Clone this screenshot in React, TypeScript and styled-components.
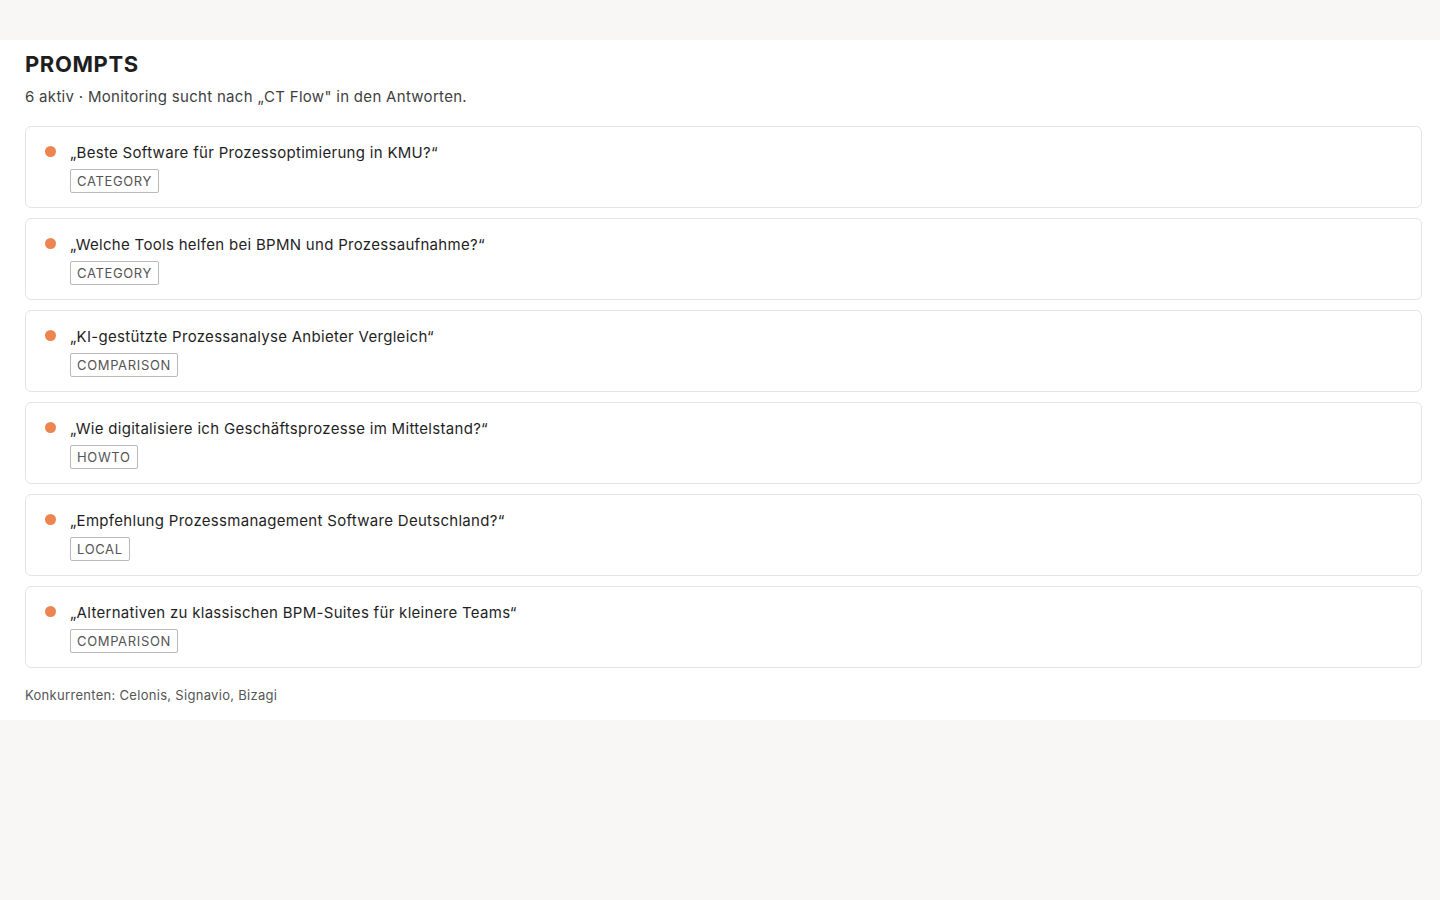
import React from "react";
import styled, { createGlobalStyle } from "styled-components";

type Prompt = {
  text: string;
  tag: string;
};

const prompts: Prompt[] = [
  { text: "„Beste Software für Prozessoptimierung in KMU?“", tag: "CATEGORY" },
  { text: "„Welche Tools helfen bei BPMN und Prozessaufnahme?“", tag: "CATEGORY" },
  { text: "„KI-gestützte Prozessanalyse Anbieter Vergleich“", tag: "COMPARISON" },
  { text: "„Wie digitalisiere ich Geschäftsprozesse im Mittelstand?“", tag: "HOWTO" },
  { text: "„Empfehlung Prozessmanagement Software Deutschland?“", tag: "LOCAL" },
  { text: "„Alternativen zu klassischen BPM-Suites für kleinere Teams“", tag: "COMPARISON" },
];

const GlobalStyle = createGlobalStyle`
  html, body {
    margin: 0;
    padding: 0;
    background: #f8f7f5;
    font-family: Inter, "Noto Sans", "Liberation Sans", sans-serif;
    -webkit-font-smoothing: antialiased;
  }
`;

const Page = styled.div`
  min-height: 900px;
  padding-top: 40px;
  box-sizing: border-box;
`;

const Panel = styled.section`
  background: #ffffff;
  padding: 10px 18px 16px 25px;
`;

const Title = styled.h1`
  margin: 0;
  font-size: 22px;
  line-height: 28px;
  font-weight: 700;
  color: #1e1e1e;
  letter-spacing: 0.6px;
`;

const Subtitle = styled.p`
  margin: 9px 0 0;
  font-size: 15px;
  line-height: 20px;
  color: #3f3f3f;
  letter-spacing: 0.3px;
`;

const List = styled.div`
  display: flex;
  flex-direction: column;
  gap: 10px;
  margin-top: 19px;
`;

const Card = styled.div`
  display: flex;
  gap: 14px;
  border: 1px solid #e4e4e4;
  border-radius: 6px;
  padding: 16px 20px 14px 19px;
`;

const Dot = styled.span`
  width: 11px;
  height: 11px;
  border-radius: 50%;
  background: #ec8550;
  margin-top: 3px;
  flex-shrink: 0;
`;

const Body = styled.div`
  display: flex;
  flex-direction: column;
  align-items: flex-start;
`;

const PromptText = styled.div`
  font-size: 15px;
  line-height: 20px;
  color: #1f1f1f;
  letter-spacing: 0.3px;
`;

const Tag = styled.span`
  margin-top: 6px;
  box-sizing: border-box;
  height: 24px;
  padding: 0 6px;
  display: inline-flex;
  align-items: center;
  border: 1px solid #b9b9b9;
  border-radius: 2px;
  font-size: 13px;
  letter-spacing: 0.65px;
  color: #555555;
`;

const Footer = styled.p`
  margin: 18px 0 0;
  font-size: 13px;
  line-height: 18px;
  color: #555555;
  letter-spacing: 0.3px;
`;

const App: React.FC = () => {
  return (
    <>
      <GlobalStyle />
      <Page>
        <Panel>
          <Title>PROMPTS</Title>
          <Subtitle>6 aktiv · Monitoring sucht nach „CT Flow" in den Antworten.</Subtitle>
          <List>
            {prompts.map((p) => (
              <Card key={p.text}>
                <Dot />
                <Body>
                  <PromptText>{p.text}</PromptText>
                  <Tag>{p.tag}</Tag>
                </Body>
              </Card>
            ))}
          </List>
          <Footer>Konkurrenten: Celonis, Signavio, Bizagi</Footer>
        </Panel>
      </Page>
    </>
  );
};

export default App;
